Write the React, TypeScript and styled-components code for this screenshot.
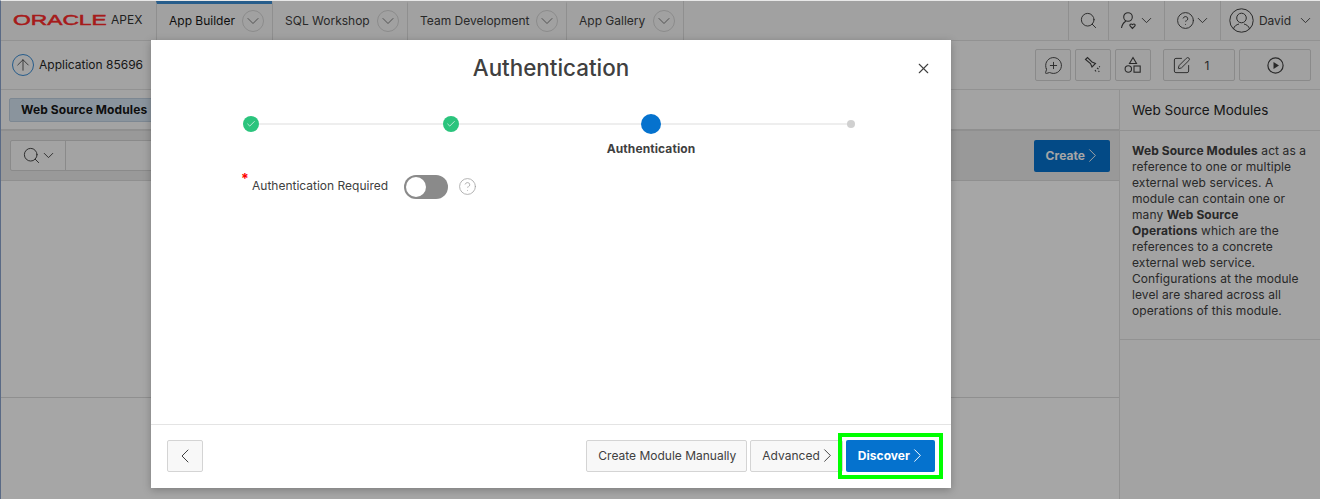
import React from 'react';
import styled, { createGlobalStyle } from 'styled-components';
import {
  ArrowUp,
  Check,
  ChevronDown,
  ChevronLeft,
  ChevronRight,
  CircleHelp,
  MessageCirclePlus,
  Search,
  SquarePen,
  X,
} from 'lucide-react';

const GlobalStyle = createGlobalStyle`
  html, body {
    margin: 0;
    padding: 0;
    background: #fff;
  }

  body {
    font-family: Inter, "Liberation Sans", sans-serif;
    font-size: 12px;
    color: #262626;
  }

  * {
    box-sizing: border-box;
  }
`;

const Page = styled.div`
  width: 1320px;
  height: 499px;
  position: relative;
  overflow: hidden;
  display: flex;
  flex-direction: column;
  background: #fff;
  border-left: 1px solid #5a6a85;
  border-top: 1px solid #e8e8e8;
`;

const Header = styled.header`
  height: 40px;
  flex: none;
  display: flex;
  background: #f8f8f8;
  border-bottom: 1px solid #e0e0e0;
`;

const Logo = styled.div`
  width: 155px;
  flex: none;
  display: flex;
  align-items: center;
  padding: 0 0 2px 12px;
`;

const LogoMark = styled.span`
  display: inline-block;
  width: 98px;
  font-family: 'Liberation Sans', sans-serif;
  font-size: 15px;
  font-weight: 400;
  -webkit-text-stroke: 0.5px #ff2a2a;
  color: #ff2a2a;
  transform: scaleX(1.52);
  transform-origin: left center;
`;

const LogoName = styled.span`
  font-size: 12px;
  color: #333;
`;

const Tab = styled.div<{ $active?: boolean; $width: number }>`
  width: ${(props) => props.$width}px;
  flex: none;
  display: flex;
  align-items: center;
  justify-content: space-between;
  padding: 0 8px 3px 12px;
  border-left: 1px solid #dcdcdc;
  border-top: 3px solid ${(props) => (props.$active ? '#3d8fd6' : 'transparent')};
  color: ${(props) => (props.$active ? '#161616' : '#404040')};
`;

const TabMenu = styled.span`
  width: 22px;
  height: 22px;
  border-radius: 50%;
  border: 1px solid #d6d6d6;
  display: flex;
  align-items: center;
  justify-content: center;
  color: #707070;
`;

const HeaderSpacer = styled.div`
  flex: 1;
  border-left: 1px solid #dcdcdc;
`;

const HeaderAction = styled.div<{ $width: number }>`
  width: ${(props) => props.$width}px;
  flex: none;
  display: flex;
  align-items: center;
  justify-content: center;
  border-left: 1px solid #dcdcdc;
  color: #404040;
`;

const ActionChevron = styled(ChevronDown)`
  margin: 0 -2px 0 -1px;
`;

const Avatar = styled.span`
  width: 25px;
  height: 25px;
  margin-right: 5px;
  display: flex;
`;

const UserName = styled.span`
  margin-right: 7px;
`;

const Toolbar = styled.div`
  height: 49px;
  flex: none;
  display: flex;
  align-items: center;
  padding: 0 9px 0 11px;
  background: #fafafa;
  border-bottom: 1px solid #e0e0e0;
`;

const UpButton = styled.span`
  width: 22px;
  height: 22px;
  border-radius: 50%;
  border: 1px solid #3d8fd6;
  display: flex;
  align-items: center;
  justify-content: center;
  margin-right: 5px;
  color: #404040;
`;

const ToolbarTitle = styled.span`
  flex: 1;
  margin-top: -2px;
  color: #262626;
`;

const ToolButton = styled.span<{ $width: number; $gap?: number }>`
  width: ${(props) => props.$width}px;
  height: 32px;
  margin-left: ${(props) => props.$gap ?? 4}px;
  display: flex;
  align-items: center;
  justify-content: center;
  gap: 14px;
  border: 1px solid #d4d4d4;
  border-radius: 2px;
  background: #f8f8f8;
  color: #404040;
`;

const ToolCount = styled.span`
  margin-right: 17px;
`;

const Body = styled.div`
  flex: 1;
  display: flex;
  min-height: 0;
`;

const Content = styled.main`
  flex: 1;
  display: flex;
  flex-direction: column;
`;

const TabStrip = styled.div`
  height: 41px;
  flex: none;
  display: flex;
  align-items: flex-start;
  padding: 8px 8px 0;
  background: #fafafa;
  border-bottom: 2px solid #dcdcdc;
`;

const Pill = styled.span`
  height: 24px;
  width: 180px;
  display: flex;
  align-items: center;
  padding: 0 0 1px 11px;
  background: #d5e4f2;
  border: 1px solid #bfd0e0;
  border-radius: 2px;
  font-weight: 700;
  letter-spacing: 0.1px;
  color: #161616;
`;

const ReportBar = styled.div`
  height: 50px;
  flex: none;
  display: flex;
  align-items: center;
  justify-content: space-between;
  padding: 0 9px;
  background: #ececec;
  border-bottom: 1px solid #dcdcdc;
`;

const SearchBox = styled.div`
  width: 320px;
  height: 31px;
  display: flex;
  background: #fafafa;
  border: 1px solid #d4d4d4;
  border-radius: 2px;
`;

const SearchMenu = styled.span`
  width: 55px;
  display: flex;
  align-items: center;
  justify-content: center;
  border-right: 1px solid #d4d4d4;
  color: #404040;
`;

const PrimaryButton = styled.button<{ $marked?: boolean }>`
  position: relative;
  height: 32px;
  display: flex;
  align-items: center;
  padding: 0 13px 0 12px;
  background: #0572ce;
  border: 0;
  border-radius: 2px;
  color: #fff;
  font: 700 12px Inter, 'Liberation Sans', sans-serif;
  letter-spacing: 0.05px;

  ${(props) =>
    props.$marked &&
    `
    &::after {
      content: '';
      position: absolute;
      inset: -7px -8px;
      border: 4px solid #00ff00;
    }
  `}
`;

const NextChevron = styled(ChevronRight)`
  margin: 0 -7px 0 -4px;
`;

const Report = styled.div`
  height: 217px;
  flex: none;
  background: #fff;
  border-bottom: 1px solid #dcdcdc;
`;

const Aside = styled.aside`
  width: 201px;
  flex: none;
  display: flex;
  flex-direction: column;
  background: #fafafa;
  border-left: 1px solid #e0e0e0;
`;

const AsideTitle = styled.div`
  height: 41px;
  flex: none;
  display: flex;
  align-items: center;
  padding-left: 12px;
  font-size: 13.5px;
  color: #262626;
  border-bottom: 1px solid #e0e0e0;
`;

const AsideText = styled.p`
  margin: 0;
  height: 209px;
  flex: none;
  padding: 12px 13px 0 12px;
  line-height: 16px;
  letter-spacing: 0.08px;
  color: #404040;
  border-bottom: 1px solid #e0e0e0;
`;

const Scrim = styled.div`
  position: absolute;
  inset: 0;
  background: rgba(0, 0, 0, 0.35);
`;

const Modal = styled.section`
  position: absolute;
  left: 150px;
  top: 39px;
  width: 800px;
  height: 448px;
  display: flex;
  flex-direction: column;
  background: #fff;
  box-shadow: 0 2px 8px rgba(0, 0, 0, 0.25);
`;

const ModalHead = styled.div`
  height: 58px;
  flex: none;
  position: relative;
  display: flex;
  align-items: center;
  justify-content: center;
  padding-bottom: 3px;
`;

const ModalTitle = styled.h1`
  margin: 0;
  font-size: 22.4px;
  font-weight: 500;
  color: #404040;
`;

const CloseButton = styled.span`
  position: absolute;
  right: 19px;
  top: 20px;
  display: flex;
  color: #404040;
`;

const Steps = styled.div`
  display: grid;
  grid-template-columns: repeat(4, 1fr);
  height: 56px;
  flex: none;
`;

const Step = styled.div<{ $last?: boolean }>`
  position: relative;
  display: flex;
  flex-direction: column;
  align-items: center;

  ${(props) =>
    !props.$last &&
    `
    &::after {
      content: '';
      position: absolute;
      left: 50%;
      width: 100%;
      top: 25px;
      height: 2px;
      background: #eeeeee;
    }
  `}
`;

const StepSlot = styled.div`
  height: 52px;
  width: 20px;
  padding-top: 16px;
  display: flex;
  align-items: flex-start;
  justify-content: center;
  z-index: 1;
`;

const StepDone = styled.span`
  width: 16px;
  height: 16px;
  margin-top: 2px;
  border-radius: 50%;
  background: #2bc47d;
  color: #fff;
  display: flex;
  align-items: center;
  justify-content: center;
`;

const StepCurrent = styled.span`
  width: 20px;
  height: 20px;
  border-radius: 50%;
  background: #0572ce;
`;

const StepNext = styled.span`
  width: 8px;
  height: 8px;
  margin-top: 6px;
  border-radius: 50%;
  background: #d0d0d0;
`;

const StepLabel = styled.span`
  font-weight: 700;
  letter-spacing: 0.1px;
  color: #404040;
  margin-top: -9px;
`;

const Field = styled.div`
  flex: 1;
  display: flex;
  align-items: flex-start;
  padding: 17px 0 0 90px;
`;

const Required = styled.span`
  color: #f00;
  font-size: 14px;
  font-weight: 700;
  line-height: 16px;
  width: 11px;
`;

const FieldLabel = styled.label`
  width: 152px;
  margin-top: 7px;
  color: #404040;
`;

const Toggle = styled.span`
  width: 44px;
  height: 24px;
  margin-top: 4px;
  padding: 2px;
  display: flex;
  border-radius: 12px;
  background: #8a8a8a;
`;

const Knob = styled.span`
  width: 20px;
  height: 20px;
  border-radius: 50%;
  background: #fff;
`;

const HelpIcon = styled.span`
  display: flex;
  margin: 6px 0 0 10px;
  color: #a0a0a0;
`;

const ModalFoot = styled.div`
  height: 64px;
  flex: none;
  display: flex;
  align-items: center;
  padding: 0 16px 2px;
  border-top: 1px solid #e4e4e4;
`;

const FootButton = styled.button<{ $square?: boolean }>`
  height: 32px;
  width: ${(props) => (props.$square ? '36px' : 'auto')};
  display: flex;
  align-items: center;
  justify-content: center;
  padding: ${(props) => (props.$square ? '0' : '0 10px 0 11px')};
  margin-right: 3px;
  background: #f8f8f8;
  border: 1px solid #d4d4d4;
  border-radius: 2px;
  color: #404040;
  font: 12px Inter, 'Liberation Sans', sans-serif;
`;

const FootSpacer = styled.div`
  flex: 1;
`;

function ProfileIcon() {
  return (
    <svg width="19" height="19" viewBox="0 0 19 19" fill="none" stroke="currentColor" strokeWidth="1.1">
      <circle cx="8" cy="6" r="4.300" />
      <path d="M1.500 17c.4-3 2-5.400 4.300-6.800" />
      <path d="M12.500 17.500l-2.400-2.500c-1-1.400 1-2.800 2.400-1.300 1.400-1.500 3.400-.1 2.400 1.300z" />
    </svg>
  );
}

function AvatarIcon() {
  return (
    <svg width="25" height="25" viewBox="0 0 25 25" fill="none" stroke="currentColor" strokeWidth="1">
      <circle cx="12.500" cy="12.500" r="11.700" />
      <circle cx="12.500" cy="10" r="4.800" />
      <path d="M4.500 21c.6-3 3-4.300 5.500-5M20.500 21c-.6-3-3-4.300-5.500-5" />
    </svg>
  );
}

function FlashlightIcon() {
  return (
    <svg width="20" height="20" viewBox="0 0 20 20" fill="none" stroke="currentColor" strokeWidth="1.100">
      <path d="M2.500 4.500l2-2 4.500 4.500 3.500 1.500-3.500 3.500-1.500-3.500z" />
      <path d="M14 13l1.500 1M12 15l1 1.500M15.500 16l.8.800M16 11.500l1 .5" />
    </svg>
  );
}

function ShapesIcon() {
  return (
    <svg width="18" height="18" viewBox="0 0 18 18" fill="none" stroke="currentColor" strokeWidth="1.100">
      <path d="M9 1.500l3.500 6h-7z" />
      <circle cx="4.300" cy="13" r="3.200" />
      <rect x="10" y="10" width="6.200" height="6.200" />
    </svg>
  );
}

function PlayIcon() {
  return (
    <svg width="17" height="17" viewBox="0 0 17 17" fill="none" stroke="currentColor" strokeWidth="1.200">
      <circle cx="8.500" cy="8.500" r="7.600" />
      <path d="M6.500 5l5.500 3.500L6.500 12z" fill="currentColor" stroke="none" />
    </svg>
  );
}

const TABS = [
  { label: 'App Builder', width: 116, active: true },
  { label: 'SQL Workshop', width: 135 },
  { label: 'Team Development', width: 159 },
  { label: 'App Gallery', width: 117 },
];

export default function App() {
  return (
    <>
      <GlobalStyle />

      <Page>
        <Header>
          <Logo>
            <LogoMark>ORACLE</LogoMark>
            <LogoName>APEX</LogoName>
          </Logo>

          {TABS.map((tab) => (
            <Tab key={tab.label} $active={tab.active} $width={tab.width}>
              <span>{tab.label}</span>
              <TabMenu>
                <ChevronDown size={20} strokeWidth={1.1} />
              </TabMenu>
            </Tab>
          ))}

          <HeaderSpacer />

          <HeaderAction $width={40}>
            <Search size={19} strokeWidth={1.2} />
          </HeaderAction>
          <HeaderAction $width={56}>
            <ProfileIcon />
            <ActionChevron size={17} strokeWidth={1.3} />
          </HeaderAction>
          <HeaderAction $width={56}>
            <CircleHelp size={19} strokeWidth={1.2} />
            <ActionChevron size={17} strokeWidth={1.3} />
          </HeaderAction>
          <HeaderAction $width={100}>
            <Avatar>
              <AvatarIcon />
            </Avatar>
            <UserName>David</UserName>
            <ActionChevron size={17} strokeWidth={1.3} />
          </HeaderAction>
        </Header>

        <Toolbar>
          <UpButton>
            <ArrowUp size={18} strokeWidth={1.1} />
          </UpButton>
          <ToolbarTitle>Application 85696</ToolbarTitle>

          <ToolButton $width={36} $gap={0}>
            <MessageCirclePlus size={19} strokeWidth={1.2} />
          </ToolButton>
          <ToolButton $width={36}>
            <FlashlightIcon />
          </ToolButton>
          <ToolButton $width={36}>
            <ShapesIcon />
          </ToolButton>
          <ToolButton $width={72} $gap={12}>
            <SquarePen size={19} strokeWidth={1.2} />
            <ToolCount>1</ToolCount>
          </ToolButton>
          <ToolButton $width={72}>
            <PlayIcon />
          </ToolButton>
        </Toolbar>

        <Body>
          <Content>
            <TabStrip>
              <Pill>Web Source Modules</Pill>
            </TabStrip>

            <ReportBar>
              <SearchBox>
                <SearchMenu>
                  <Search size={19} strokeWidth={1.2} />
                  <ActionChevron size={17} strokeWidth={1.3} />
                </SearchMenu>
              </SearchBox>

              <PrimaryButton>
                Create
                <NextChevron size={23} strokeWidth={1} />
              </PrimaryButton>
            </ReportBar>

            <Report />
          </Content>

          <Aside>
            <AsideTitle>Web Source Modules</AsideTitle>
            <AsideText>
              <b>Web Source Modules</b> act as a reference to one or multiple external web services. A
              module can contain one or many <b>Web Source</b>
              <br />
              <b>Operations</b> which are the references to a concrete external web service.
              Configurations at the module level are shared across all operations of this module.
            </AsideText>
          </Aside>
        </Body>

        <Scrim />

        <Modal>
          <ModalHead>
            <ModalTitle>Authentication</ModalTitle>
            <CloseButton>
              <X size={17} strokeWidth={1.5} />
            </CloseButton>
          </ModalHead>

          <Steps>
            <Step>
              <StepSlot>
                <StepDone>
                  <Check size={10} strokeWidth={1.6} />
                </StepDone>
              </StepSlot>
            </Step>
            <Step>
              <StepSlot>
                <StepDone>
                  <Check size={10} strokeWidth={1.6} />
                </StepDone>
              </StepSlot>
            </Step>
            <Step>
              <StepSlot>
                <StepCurrent />
              </StepSlot>
              <StepLabel>Authentication</StepLabel>
            </Step>
            <Step $last>
              <StepSlot>
                <StepNext />
              </StepSlot>
            </Step>
          </Steps>

          <Field>
            <Required>*</Required>
            <FieldLabel>Authentication Required</FieldLabel>
            <Toggle>
              <Knob />
            </Toggle>
            <HelpIcon>
              <CircleHelp size={19} strokeWidth={1} />
            </HelpIcon>
          </Field>

          <ModalFoot>
            <FootButton $square>
              <ChevronLeft size={24} strokeWidth={1} />
            </FootButton>
            <FootSpacer />
            <FootButton>Create Module Manually</FootButton>
            <FootButton>
              Advanced
              <NextChevron size={23} strokeWidth={1} />
            </FootButton>
            <PrimaryButton $marked>
              Discover
              <NextChevron size={23} strokeWidth={1} />
            </PrimaryButton>
          </ModalFoot>
        </Modal>
      </Page>
    </>
  );
}
